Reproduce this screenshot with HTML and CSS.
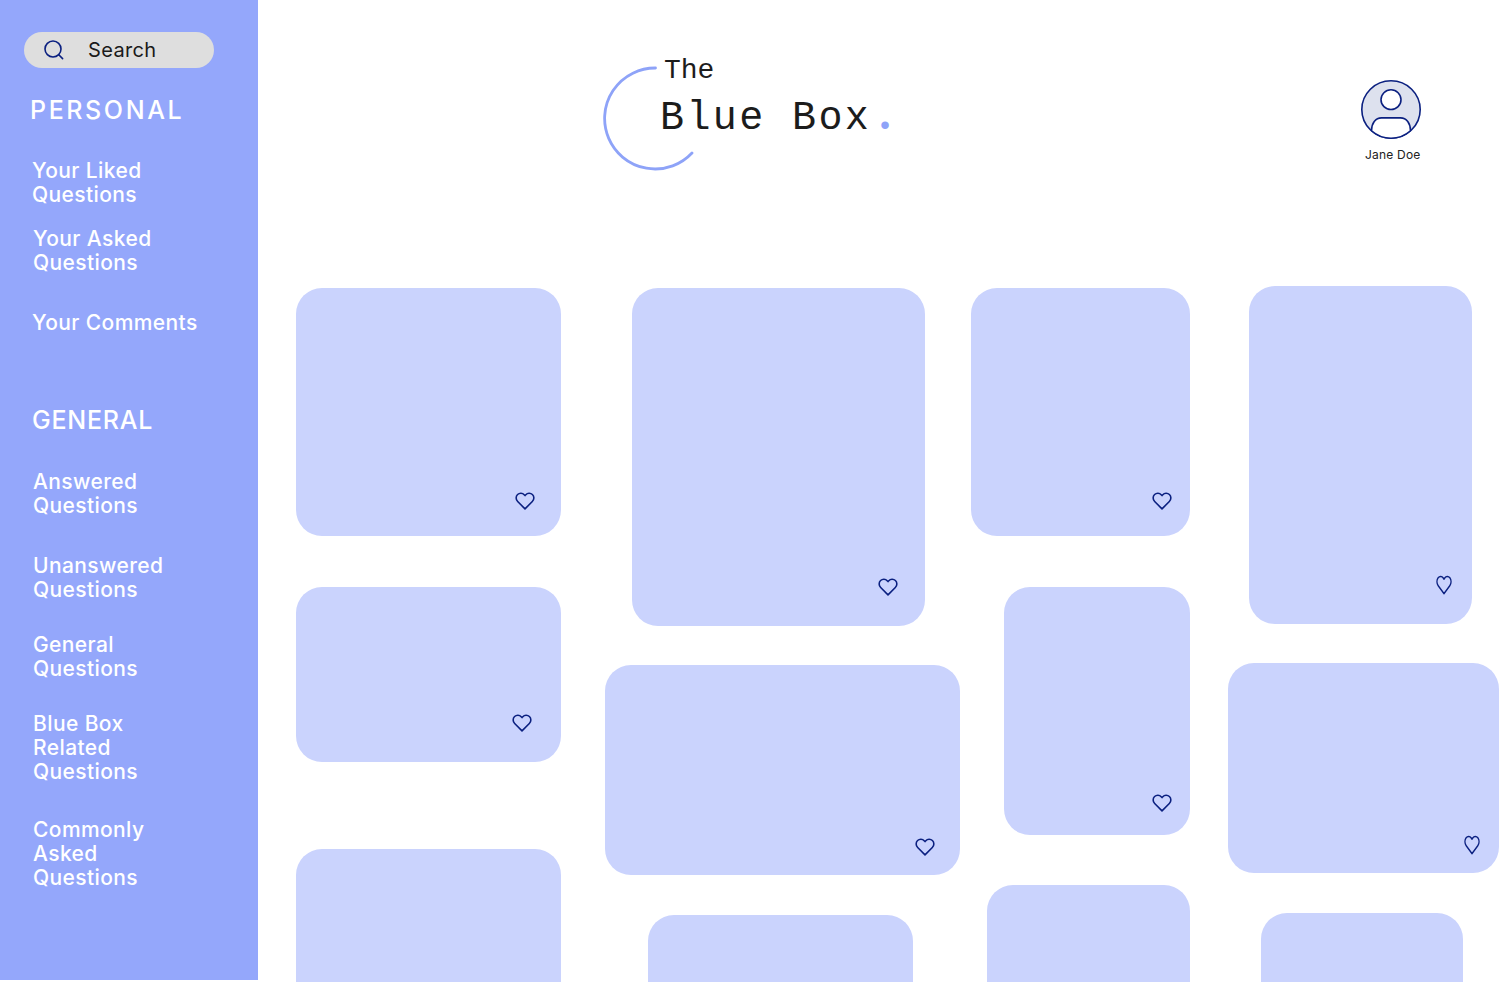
FILE: index.html
```html
<!DOCTYPE html>
<html lang="en">
<head>
<meta charset="utf-8">
<title>The Blue Box</title>
<link rel="stylesheet" href="styles.css">
</head>
<body>
<div class="page">
  <aside class="sidebar">
    <div class="search">
      <svg class="search-icon" width="22" height="22" viewBox="0 0 22 22" fill="none"><circle cx="10" cy="10" r="8" stroke="#0b2080" stroke-width="1.6"/><path d="M15.8 15.8L19.6 19.6" stroke="#0b2080" stroke-width="1.6" stroke-linecap="round"/></svg>
      <span class="search-label">Search</span>
    </div>
    <h2 class="section-title title-personal">PERSONAL</h2>
    <a class="nav-item nav-a">Your Liked<br>Questions</a>
    <a class="nav-item nav-b">Your Asked<br>Questions</a>
    <a class="nav-item nav-c">Your Comments</a>
    <h2 class="section-title title-general">GENERAL</h2>
    <a class="nav-item nav-d">Answered<br>Questions</a>
    <a class="nav-item nav-e">Unanswered<br>Questions</a>
    <a class="nav-item nav-f">General<br>Questions</a>
    <a class="nav-item nav-f">Blue Box<br>Related<br>Questions</a>
    <a class="nav-item nav-g">Commonly<br>Asked<br>Questions</a>
  </aside>
  <main class="main">
    <header class="header">
      <div class="logo">
        <svg class="logo-arc" width="100" height="120" viewBox="0 0 100 120" fill="none"><path d="M52.500 15A50.500 50.500 0 1 0 89 100" stroke="#8ea3f8" stroke-width="2.800" stroke-linecap="round"/></svg>
        <div class="logo-text">
          <div class="logo-the">The</div>
          <div class="logo-name">Blue Box<span class="logo-dot">.</span></div>
        </div>
      </div>
      <div class="profile">
        <svg class="avatar" width="60" height="59" viewBox="1 1 60 60" preserveAspectRatio="none" fill="none"><circle cx="31" cy="31" r="29.2" fill="#dde1ee" stroke="#0b2080" stroke-width="1.600"/><circle cx="31" cy="21" r="10" fill="#fff" stroke="#0b2080" stroke-width="1.600"/><path d="M11.500 52.600C11.500 45 15.500 39.500 21.500 39.500H40.500C46.500 39.500 50.500 45 50.500 52.600C45 57.500 38.500 60.200 31 60.200C23.500 60.200 17 57.500 11.500 52.600Z" fill="#fff" stroke="#0b2080" stroke-width="1.600"/></svg>
        <div class="profile-name">Jane Doe</div>
      </div>
    </header>
    <section class="board">
      <div class="col col-1">
        <div class="card c1a"><svg class="heart" viewBox="0 0 24 22" fill="none"><path d="M12 20.500L3.200 11.600C.8 9.100.8 5.400 3.100 3.200 5.400 1 9 1.200 11 3.400L12 4.500 13 3.400C15 1.200 18.600 1 20.900 3.200 23.200 5.400 23.200 9.100 20.800 11.600Z" stroke="#0b2080" stroke-width="1.900" stroke-linejoin="round"/></svg></div>
        <div class="card c1b"><svg class="heart" viewBox="0 0 24 22" fill="none"><path d="M12 20.500L3.200 11.600C.8 9.100.8 5.400 3.100 3.200 5.400 1 9 1.200 11 3.400L12 4.500 13 3.400C15 1.200 18.600 1 20.900 3.200 23.200 5.400 23.200 9.100 20.800 11.600Z" stroke="#0b2080" stroke-width="1.900" stroke-linejoin="round"/></svg></div>
        <div class="card c1c"></div>
      </div>
      <div class="col col-2">
        <div class="card c2a"><svg class="heart" viewBox="0 0 24 22" fill="none"><path d="M12 20.500L3.200 11.600C.8 9.100.8 5.400 3.100 3.200 5.400 1 9 1.200 11 3.400L12 4.500 13 3.400C15 1.200 18.600 1 20.900 3.200 23.200 5.400 23.200 9.100 20.800 11.600Z" stroke="#0b2080" stroke-width="1.900" stroke-linejoin="round"/></svg></div>
        <div class="card c2b"><svg class="heart" viewBox="0 0 24 22" fill="none"><path d="M12 20.500L3.200 11.600C.8 9.100.8 5.400 3.100 3.200 5.400 1 9 1.200 11 3.400L12 4.500 13 3.400C15 1.200 18.600 1 20.900 3.200 23.200 5.400 23.200 9.100 20.800 11.600Z" stroke="#0b2080" stroke-width="1.900" stroke-linejoin="round"/></svg></div>
        <div class="card c2c"></div>
      </div>
      <div class="col col-3">
        <div class="card c3a"><svg class="heart" viewBox="0 0 24 22" fill="none"><path d="M12 20.500L3.200 11.600C.8 9.100.8 5.400 3.100 3.200 5.400 1 9 1.200 11 3.400L12 4.500 13 3.400C15 1.200 18.600 1 20.900 3.200 23.200 5.400 23.200 9.100 20.800 11.600Z" stroke="#0b2080" stroke-width="1.900" stroke-linejoin="round"/></svg></div>
        <div class="card c3b"><svg class="heart" viewBox="0 0 24 22" fill="none"><path d="M12 20.500L3.200 11.600C.8 9.100.8 5.400 3.100 3.200 5.400 1 9 1.200 11 3.400L12 4.500 13 3.400C15 1.200 18.600 1 20.900 3.200 23.200 5.400 23.200 9.100 20.800 11.600Z" stroke="#0b2080" stroke-width="1.900" stroke-linejoin="round"/></svg></div>
        <div class="card c3c"></div>
      </div>
      <div class="col col-4">
        <div class="card c4a"><svg class="heart heart-narrow" viewBox="0 0 24 22" fill="none" preserveAspectRatio="none"><path d="M12 20.500L3.200 11.600C.8 9.100.8 5.400 3.100 3.200 5.400 1 9 1.200 11 3.400L12 4.500 13 3.400C15 1.200 18.600 1 20.900 3.200 23.200 5.400 23.200 9.100 20.800 11.600Z" stroke="#0b2080" stroke-width="1.900" stroke-linejoin="round"/></svg></div>
        <div class="card c4b"><svg class="heart heart-narrow" viewBox="0 0 24 22" fill="none" preserveAspectRatio="none"><path d="M12 20.500L3.200 11.600C.8 9.100.8 5.400 3.100 3.200 5.400 1 9 1.200 11 3.400L12 4.500 13 3.400C15 1.200 18.600 1 20.900 3.200 23.200 5.400 23.200 9.100 20.800 11.600Z" stroke="#0b2080" stroke-width="1.900" stroke-linejoin="round"/></svg></div>
        <div class="card c4c"></div>
      </div>
    </section>
  </main>
</div>
</body>
</html>
```

FILE: styles.css
```css
* { box-sizing: border-box; }
html, body { margin: 0; height: 982px; overflow: hidden; background: #fff; }
body { font-family: Inter, "Noto Sans", sans-serif; }
.page { display: flex; align-items: flex-start; height: 982px; overflow: hidden; }

.sidebar { flex: 0 0 258px; height: 980px; background: #94a7fb; padding: 32px 0 0 24px; color: #fff; display: flex; flex-direction: column; align-items: flex-start; }
.search { width: 190px; height: 36px; border-radius: 18px; background: #dedede; display: flex; align-items: center; padding-left: 19px; color: #1a1a1a; font-size: 20px; letter-spacing: .35px; }
.search-icon { margin-right: 23px; flex: none; }
.section-title { margin: 0; font-size: 25px; line-height: 30px; font-weight: 500; }
.title-personal { margin: 27px 0 0 6px; letter-spacing: 2.600px; }
.title-general { margin: 70px 0 0 8px; letter-spacing: .750px; }
.nav-item { display: block; font-size: 21px; line-height: 24px; font-weight: 500; letter-spacing: .4px; margin-left: 9px; }
.nav-a { margin-top: 34px; margin-left: 8px; }
.nav-b { margin-top: 20px; }
.nav-c { margin-top: 36px; margin-left: 8px; }
.nav-d { margin-top: 35px; }
.nav-e { margin-top: 36px; }
.nav-f { margin-top: 31px; }
.nav-g { margin-top: 34px; }

.main { flex: 1; min-width: 0; }
.header { height: 286px; padding: 55px 0 0 345px; display: flex; align-items: flex-start; }
.logo { display: grid; width: 290px; }
.logo-arc { grid-area: 1 / 1; margin-top: -2px; }
.logo-text { grid-area: 1 / 1; padding: 1px 0 0 57px; font-family: "Liberation Mono", monospace; color: #1c1c1c; }
.logo-the { font-size: 28px; line-height: 30px; padding-left: 4px; }
.logo-name { font-size: 40px; line-height: 46px; letter-spacing: 2.400px; margin-top: 10px; white-space: nowrap; }
.logo-dot { font-family: "Liberation Serif", serif; font-size: 46px; line-height: 0; font-weight: 700; color: #8ea3f8; margin-left: 8px; }
.profile { margin: 25px 0 0 468px; display: flex; flex-direction: column; align-items: flex-start; }
.avatar { display: block; }
.profile-name { font-size: 12px; line-height: 14px; letter-spacing: .2px; margin: 9px 0 0 4px; color: #222; white-space: nowrap; }

.board { display: flex; align-items: flex-start; padding-left: 38px; }
.col { display: flex; flex-direction: column; flex: none; }
.col-1 { width: 265px; margin-top: 2px; }
.col-2 { width: 355px; margin-left: 44px; margin-top: 2px; }
.col-3 { width: 219px; margin-left: 11px; margin-top: 2px; }
.col-4 { width: 271px; margin-left: 38px; }
.card { flex: none; background: #cad3fd; border-radius: 26px; display: flex; justify-content: flex-end; align-items: flex-end; }
.heart { width: 20px; height: 20px; display: block; flex: none; }
.heart-narrow { width: 16px; height: 20px; }

.c1a { width: 265px; height: 248px; padding: 0 26px 25px 0; }
.c1b { width: 265px; height: 175px; margin-top: 51px; padding: 0 29px 29px 0; }
.c1c { width: 265px; height: 160px; margin-top: 87px; }
.c2a { width: 293px; height: 338px; margin-left: 27px; padding: 0 27px 29px 0; }
.c2b { width: 355px; height: 210px; margin-top: 39px; padding: 0 25px 18px 0; }
.c2c { width: 265px; height: 120px; margin-top: 40px; margin-left: 43px; }
.c3a { width: 219px; height: 248px; padding: 0 18px 25px 0; }
.c3b { width: 186px; height: 248px; margin-top: 51px; margin-left: 33px; padding: 0 18px 22px 0; }
.c3c { width: 203px; height: 140px; margin-top: 50px; margin-left: 16px; }
.c4a { width: 223px; height: 338px; margin-left: 21px; padding: 0 20px 29px 0; }
.c4b { width: 271px; height: 210px; margin-top: 39px; padding: 0 19px 18px 0; }
.c4c { width: 202px; height: 120px; margin-top: 40px; margin-left: 33px; }
```
